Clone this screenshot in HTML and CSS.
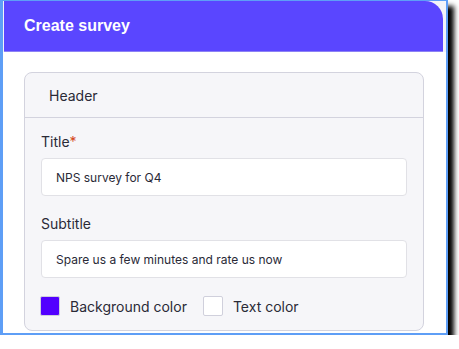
FILE: index.html
```html
<!DOCTYPE html>
<html lang="en">
<head>
    <meta charset="UTF-8">
    <meta name="viewport" content="width=device-width, initial-scale=1.0">
    <title>Create survey</title>
    <link rel="stylesheet" href="styles.css">
</head>
<body>
    <div class="window">
        <div class="topbar-wrap">
            <div class="topbar">Create survey</div>
        </div>
        <div class="content">
            <div class="card">
                <div class="card-head">Header</div>
                <div class="card-body">
                    <label class="field-label">Title<span class="required">*</span></label>
                    <div class="input">NPS survey for Q4</div>

                    <label class="field-label second">Subtitle</label>
                    <div class="input">Spare us a few minutes and rate us now</div>

                    <div class="colors">
                        <div class="color-pick">
                            <span class="swatch purple"></span>
                            <span>Background color</span>
                        </div>
                        <div class="color-pick">
                            <span class="swatch white"></span>
                            <span>Text color</span>
                        </div>
                    </div>
                </div>
            </div>
        </div>
    </div>
</body>
</html>
```

FILE: styles.css
```css
/* Reset */
body {
    margin: 0;
    padding: 0;
    background-color: #fff;
    font-family: Inter, "Noto Sans", sans-serif;
    color: #2a2a37;
}

/* Outer window frame */
.window {
    width: 443px;
    border: 2px solid #5e9ef6;
    border-left-width: 3px;
    border-top-width: 1px;
    background-color: #fff;
    box-shadow: 6px 6px 5px #000;
}

.topbar-wrap {
    background-color: #f3f4f9;
    padding-left: 1px;
    padding-right: 3px;
}

.topbar {
    height: 50px;
    background-color: #5a46ff;
    border-top-right-radius: 18px;
    border-bottom: 1px solid #8c82f4;
    padding-left: 20px;
    display: flex;
    align-items: center;
    color: #fff;
    font-family: "Liberation Sans", Arial, sans-serif;
    font-weight: bold;
    font-size: 16px;
}

.content {
    padding: 20px 22px 2px 21px;
}

/* Card */
.card {
    background-color: #f6f6f9;
    border: 1px solid #d3d3de;
    border-radius: 8px;
}

.card-head {
    height: 44px;
    display: flex;
    align-items: center;
    padding-left: 24px;
    font-size: 14px;
    border-bottom: 1px solid #d3d3de;
}

.card-body {
    padding: 14px 16px 14px 16px;
}

.field-label {
    display: block;
    font-size: 14px;
    line-height: 20px;
    margin-bottom: 6px;
}

.field-label.second {
    margin-top: 18px;
}

.required {
    color: #d4461a;
}

.input {
    height: 36px;
    display: flex;
    align-items: center;
    padding-left: 14px;
    background-color: #fff;
    border: 1px solid #e1e1e6;
    border-radius: 4px;
    font-size: 12px;
}

/* Color pickers */
.colors {
    display: flex;
    gap: 17px;
    margin-top: 18px;
}

.color-pick {
    display: flex;
    align-items: center;
    gap: 10px;
    font-size: 14px;
    margin-left: -1px;
}

.swatch {
    width: 18px;
    height: 18px;
    border: 1px solid #d0d0dc;
    border-radius: 2px;
}

.swatch.purple {
    background-color: #5200ff;
}

.swatch.white {
    background-color: #fff;
}
```
